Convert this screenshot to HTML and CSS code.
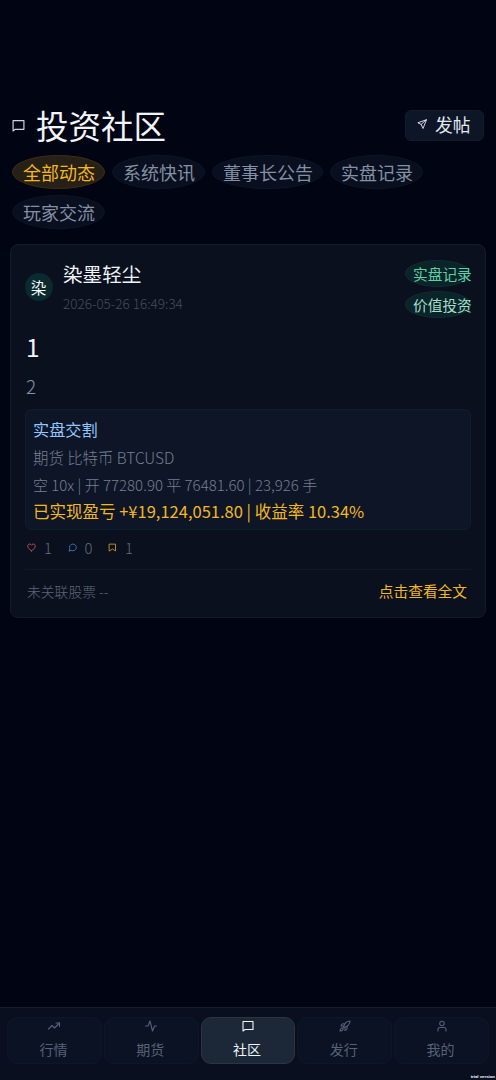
FILE: index.html
```html
<!DOCTYPE html>
<html lang="zh-CN">
<head>
<meta charset="utf-8">
<title>投资社区</title>
<link rel="stylesheet" href="styles.css">
</head>
<body>
<div class="app">
  <main class="page">
    <header class="head">
      <svg class="icon head-icon" viewBox="0 0 24 24"><path d="M2 3h20v16H6l-4 3z"/></svg>
      <h1 class="title">投资社区</h1>
      <button class="post-btn">
        <svg class="icon send" viewBox="0 0 24 24"><path d="M22 2 2 9l8 4 4 9z"/><path d="M22 2 10 13"/></svg>
        <span class="post-label">发帖</span>
      </button>
    </header>
    <nav class="chips">
      <span class="chip chip-on">全部动态</span>
      <span class="chip">系统快讯</span>
      <span class="chip">董事长公告</span>
      <span class="chip">实盘记录</span>
      <span class="chip">玩家交流</span>
    </nav>
    <article class="card">
      <div class="author">
        <div class="avatar">染</div>
        <div class="who">
          <div class="name">染墨轻尘</div>
          <div class="time">2026-05-26 16:49:34</div>
        </div>
        <div class="tags">
          <span class="tag">实盘记录</span>
          <span class="tag tag-light">价值投资</span>
        </div>
      </div>
      <h2 class="post-title">1</h2>
      <p class="post-body">2</p>
      <section class="trade">
        <div class="trade-title">实盘交割</div>
        <div class="trade-line asset">期货 比特币 BTCUSD</div>
        <div class="trade-line detail">空 10x | 开 77280.90 平 76481.60 | 23,926 手</div>
        <div class="trade-profit">已实现盈亏 +¥19,124,051.80 | 收益率 10.34%</div>
      </section>
      <div class="stats">
        <svg class="icon stat-icon red" viewBox="0 0 24 24"><path d="M12 21C7 17 2 13 2 8.500C2 2 9 1 12 6C15 1 22 2 22 8.500C22 13 17 17 12 21z"/></svg>
        <span class="stat">1</span>
        <svg class="icon stat-icon blue" viewBox="0 0 24 24"><path d="M3 21l1.500-6A9 9 0 1 1 9 20z"/></svg>
        <span class="stat">0</span>
        <svg class="icon stat-icon gold" viewBox="0 0 24 24"><path d="M4 3h16v18l-8-5-8 5z"/></svg>
        <span class="stat">1</span>
      </div>
      <footer class="card-foot">
        <span class="stock">未关联股票 --</span>
        <a class="more">点击查看全文</a>
      </footer>
    </article>
  </main>
  <nav class="tabbar">
    <div class="tab"><svg class="icon tab-icon" viewBox="0 0 24 24"><path d="M1 18l7-7 5 5L23 6"/><path d="M16 6h7v7"/></svg><span class="tab-label">行情</span></div>
    <div class="tab"><svg class="icon tab-icon" viewBox="0 0 24 24"><path d="M1 12h5L10 2l5 20 4-10h4"/></svg><span class="tab-label">期货</span></div>
    <div class="tab tab-on"><svg class="icon tab-icon" viewBox="0 0 24 24"><path d="M2 3h20v16H6l-4 3z"/></svg><span class="tab-label">社区</span></div>
    <div class="tab"><svg class="icon tab-icon" viewBox="0 0 24 24"><path d="M9 14C11 7 15 2 22 2c0 7-5 11-12 13z"/><path d="M9 12H4c1-4 4-5 7-4M12 15v6c4-1 5-4 4-8M5 16c-2 1-3 6-3 6s5 0 6-3c1-2-1-4-3-3z"/></svg><span class="tab-label">发行</span></div>
    <div class="tab"><svg class="icon tab-icon" viewBox="0 0 24 24"><circle cx="12" cy="7" r="4.500"/><path d="M4 22v-3c0-3 2-4 4-4h8c2 0 4 1 4 4v3"/></svg><span class="tab-label">我的</span></div>
    <span class="watermark">trial version</span>
  </nav>
</div>
</body>
</html>
```
FILE: styles.css
```css
* { box-sizing: border-box; }
body {
  margin: 0;
  background: #010413;
  color: #f1f5f9;
  font-family: "Noto Sans CJK SC", sans-serif;
  font-weight: 400;
}
.app { height: 1080px; display: flex; flex-direction: column; overflow: hidden; }
.page { flex: 1; padding: 105px 10px 0; }
.icon { display: block; flex: none; fill: none; stroke: currentColor; stroke-width: 2.2; stroke-linecap: round; stroke-linejoin: round; }

.head { display: flex; align-items: center; height: 40px; padding: 0 2px; }
.head-icon { width: 13px; height: 13px; color: #cbd5e1; }
.title { margin: 0 auto 0 11px; font-size: 32.5px; line-height: 40px; font-weight: 400; white-space: nowrap; }
.post-btn {
  display: flex; align-items: center; width: 79px; height: 31px; padding: 0 0 0 11px;
  border: 1px solid #121c2c; border-radius: 6px; background: #0d1626; color: #e2e8f0; font: inherit;
}
.send { width: 10px; height: 10px; margin-top: -3px; }
.post-label { margin: -2px 0 0 8px; font-size: 17.8px; line-height: 28px; white-space: nowrap; }

.chips { display: flex; flex-wrap: wrap; gap: 6px 7px; padding: 10px 2px 0; }
.chip {
  height: 34px; padding: 0 9px 0 10px; border: 1px solid #0e1526; border-radius: 50%;
  background: #090f1e; color: #8390a5; font-size: 18px; line-height: 32px; white-space: nowrap;
}
.chip-on { background: #272016; border-color: #3b2d13; color: #f2b820; }

.card {
  height: 374px; margin-top: 15px; padding: 15px 14px 0;
  border: 1px solid #141b2b; border-radius: 8px; background: #0b101f;
}
.author { display: flex; height: 60px; }
.avatar {
  width: 28px; height: 28px; margin-top: 13px; padding-right: 1px; border-radius: 50%;
  background: #0a2a2d; font-size: 15.6px; line-height: 28px; text-align: center;
}
.who { flex: 1; margin-left: 10px; }
.name { font-size: 19.6px; line-height: 28px; }
.time { margin-top: 1px; color: #434c5e; font-size: 13.5px; line-height: 28px; font-weight: 300; }
.tags { display: flex; flex-direction: column; gap: 4px; width: 66px; }
.tag {
  height: 27px; padding-left: 7px; border: 1px solid #0c2e2e; border-radius: 50%;
  background: #0a2429; color: #61cfa6; font-size: 14.7px; line-height: 25px; white-space: nowrap;
}
.tag-light { color: #a4dfc8; }
.post-title { margin: 8px 0 0 1px; font-size: 24.5px; line-height: 38px; font-weight: 400; }
.post-body { margin: 4px 0 0 1px; color: #8390a5; font-size: 18.8px; line-height: 32px; font-weight: 300; }
.trade {
  height: 121px; margin-top: 7px; padding: 5px 7px 0;
  border: 1px solid #121c2d; border-radius: 6px; background: #0d1527; white-space: nowrap;
}
.trade-title { color: #93c5fd; font-size: 16.2px; line-height: 28px; }
.trade-line { color: #767f91; line-height: 27px; font-weight: 300; }
.asset { margin-top: 1px; font-size: 15.4px; }
.detail { font-size: 15px; }
.trade-profit { color: #f2b820; font-size: 16.5px; line-height: 26px; }
.stats { display: flex; align-items: center; height: 40px; padding: 0 0 4px 2px; border-bottom: 1px solid #111827; }
.stat-icon { width: 9px; height: 9px; margin: 0 1px 0 0; }
.stat { width: 23.5px; margin: 0 0 0 7px; color: #616b7e; font-size: 14.8px; font-weight: 300; }
.red { color: #d75c68; }
.blue { color: #4184c7; }
.gold { color: #d5a22a; }
.card-foot { display: flex; justify-content: space-between; padding: 8px 4px 0 2px; line-height: 26px; }
.stock { color: #5c6678; font-size: 13.8px; font-weight: 300; }
.more { color: #f2b820; font-size: 14.7px; }

.tabbar {
  position: relative; display: grid; grid-template-columns: repeat(5, 1fr); gap: 2px;
  height: 73px; padding: 9px 7px 16px 7px; border-top: 1px solid #151e2e; background: #090f1e;
}
.tab {
  display: flex; flex-direction: column; align-items: center; height: 47px; padding: 2px 2px 0 0;
  border: 1px solid #0e1628; border-radius: 10px; background: #0b1223; color: #566277;
}
.tab-on { background: #1c2838; border-color: #30353d; color: #f1f5f9; }
.tab-icon { width: 12px; height: 12px; margin-left: 2px; }
.tab-label { margin-top: 5px; font-size: 14px; line-height: 24px; }
.watermark { position: absolute; right: 1px; bottom: 1px; color: #fff; font: bold 4.3px/5px "Liberation Sans", sans-serif; white-space: nowrap; }
```
